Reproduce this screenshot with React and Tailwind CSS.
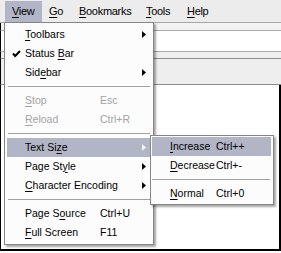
const font = { fontFamily: '"Liberation Sans", Arial, sans-serif' };

const Arrow = ({ light }) => (
    <svg width="4" height="7" viewBox="0 0 4 7" className="shrink-0">
        <polygon points="0,0 4,3.5 0,7" fill={light ? "#f4f4f8" : "#000"} />
    </svg>
);

const Check = () => (
    <svg width="9" height="8" viewBox="0 0 9 8">
        <path d="M1 3.5 L3.2 6 L8 1" stroke="#000" strokeWidth="2" fill="none" />
    </svg>
);

// label with one underlined mnemonic letter
const Label = ({ text, at }) => (
    <span className="whitespace-nowrap">
        {text.slice(0, at)}
        <u className="underline-offset-[2px]">{text[at]}</u>
        {text.slice(at + 1)}
    </span>
);

const Sep = ({ className }) => (
    <div className={`h-[9px] flex items-center ${className}`}>
        <div className="w-full border-t border-[#a2a2a2]" />
    </div>
);

const Item = ({ text, at, shortcut, arrow, checked, disabled, active }) => (
    <div
        className={`mx-[2px] h-[19px] flex items-center ${active ? "bg-[#b2b5c5]" : ""} ${disabled ? "text-[#a3a3a3]" : "text-black"}`}
    >
        <span className="w-[18px] pl-[5px] flex items-center">{checked && <Check />}</span>
        <span className="w-[75px]">
            <Label text={text} at={at} />
        </span>
        {shortcut && <span className="whitespace-nowrap">{shortcut}</span>}
        {arrow && (
            <span className="ml-auto mr-[5px] flex items-center">
                <Arrow light={active} />
            </span>
        )}
    </div>
);

const SubItem = ({ text, at, shortcut, active }) => (
    <div className={`ml-[1px] mr-[2px] h-[19px] flex items-center pl-[18px] ${active ? "bg-[#b2b5c5]" : ""}`}>
        <span className="w-[44px] mr-[2px]">
            <Label text={text} at={at} />
        </span>
        <span className="whitespace-nowrap">{shortcut}</span>
    </div>
);

const menuBar = [
    { t: "View", w: "w-[37px]", active: true },
    { t: "Go", w: "w-[30px]" },
    { t: "Bookmarks", w: "w-[67px]" },
    { t: "Tools", w: "w-[41px]" },
    { t: "Help", w: "w-[40px]" },
];

export default function App() {
    return (
        <div className="relative w-[281px] h-[253px] bg-white overflow-hidden text-[10.5px]" style={font}>
            {/* window behind the menus */}
            <div className="h-[23px] bg-[#ececec] border-b border-[#a8a8a8] flex pl-[5px] pt-[1px] text-[11px] tracking-[-0.3px]">
                {menuBar.map((m) => (
                    <div
                        key={m.t}
                        className={`${m.w} h-[21px] pl-[7px] flex items-center ${m.active ? "bg-[#b2b5c5]" : ""}`}
                    >
                        <Label text={m.t} at={0} />
                    </div>
                ))}
            </div>
            <div className="h-[8px] bg-[#f3f3f3] border-b border-[#a8a8a8] border-l border-l-black" />
            <div className="h-[21px] bg-white border-b border-[#a8a8a8] border-l border-l-black" />
            <div className="h-[7px] bg-[#efefef] border-b border-[#8c8c8c] border-l border-l-black" />
            <div className="h-[26px] bg-[#eeeeee] border-b border-[#8c8c8c] border-l border-l-black" />
            <div className="h-[166px] bg-white border-l border-l-black border-r-2 border-r-black border-b-2 border-b-black" />

            {/* View menu */}
            <div className="absolute left-[4px] top-[22px] w-[150px] bg-[#fcfcfc] border border-[#858585] py-[2px] shadow-[2px_2px_2px_rgba(0,0,0,0.35)]">
                <Item text="Toolbars" at={0} arrow />
                <Item text="Status Bar" at={7} checked />
                <Item text="Sidebar" at={3} arrow />
                <Sep className="px-[3px]" />
                <Item text="Stop" at={0} shortcut="Esc" disabled />
                <Item text="Reload" at={0} shortcut="Ctrl+R" disabled />
                <Sep className="px-[3px]" />
                <Item text="Text Size" at={7} arrow active />
                <Item text="Page Style" at={7} arrow />
                <Item text="Character Encoding" at={0} arrow />
                <Sep className="px-[3px]" />
                <Item text="Page Source" at={6} shortcut="Ctrl+U" />
                <Item text="Full Screen" at={0} shortcut="F11" />
            </div>

            {/* Text Size submenu */}
            <div className="absolute left-[150px] top-[135px] w-[124px] bg-[#fcfcfc] border border-[#858585] py-[1px] shadow-[2px_2px_2px_rgba(0,0,0,0.35)]">
                <SubItem text="Increase" at={0} shortcut="Ctrl++" active />
                <SubItem text="Decrease" at={0} shortcut="Ctrl+-" />
                <Sep className="pl-[1px] pr-[3px]" />
                <SubItem text="Normal" at={0} shortcut="Ctrl+0" />
            </div>
        </div>
    );
}
